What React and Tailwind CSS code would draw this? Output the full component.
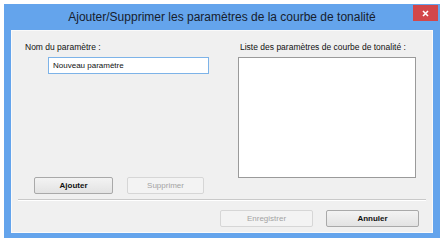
import React from "react";

const font = { fontFamily: '"Liberation Sans", Arial, sans-serif' };

const Btn = ({ label, disabled, className = "" }) => (
  <button
    type="button"
    disabled={disabled}
    className={
      "flex h-[17px] items-center justify-center rounded-[2px] border text-[8px] leading-none " +
      (disabled
        ? "border-[#d6d6d6] bg-[#f3f3f3] text-[#a3a3a3] "
        : "border-[#a9a9a9] bg-gradient-to-b from-[#f3f3f3] to-[#e3e3e3] font-bold text-[#111] ") +
      className
    }
  >
    {label}
  </button>
);

export default function App() {
  return (
    <div className="h-[240px] w-[445px] bg-white pl-[4px] pt-[4px]" style={font}>
      <div className="flex h-[234px] w-[436px] flex-col bg-[#64a4ec] px-[7px] pb-[5px]">
        {/* Title bar */}
        <div className="relative flex h-[26px] items-center justify-center">
          <span className="text-[12px] text-[#17202c]">
            Ajouter/Supprimer les paramètres de la courbe de tonalité
          </span>
          <div className="absolute right-[-5px] top-[1px] flex h-[16px] w-[25px] items-center justify-center bg-[#d3474a]">
            <svg width="7" height="7" viewBox="0 0 7 7">
              <path d="M1 1L6 6M6 1L1 6" stroke="white" strokeWidth="1.6" />
            </svg>
          </div>
        </div>

        {/* Content */}
        <div className="flex flex-1 flex-col border border-[#fafafa] bg-[#f0f0f0]">
          <div className="flex h-[164px]">
            {/* Left column */}
            <div className="flex w-[226px] flex-col pl-[13px] pt-[10px]">
              <div className="text-[8.5px] leading-[12px] text-[#111]">Nom du paramètre :</div>
              <div className="ml-[23px] mt-[4px] flex h-[17px] w-[161px] items-center border border-[#7db3e8] bg-white pl-[4px] text-[8px] text-[#111]">
                Nouveau paramètre
              </div>
              <div className="mt-auto flex gap-[14px] pb-[1px] pl-[9px]">
                <Btn label="Ajouter" className="w-[79px]" />
                <Btn label="Supprimer" disabled className="w-[77px]" />
              </div>
            </div>
            {/* Right column */}
            <div className="flex flex-col pt-[10px]">
              <div className="pl-[2px] text-[8.5px] leading-[12px] text-[#111]">
                Liste des paramètres de courbe de tonalité :
              </div>
              <div className="mt-[4px] h-[121px] w-[178px] border border-[#9a9a9a] bg-white" />
            </div>
          </div>

          {/* Separator */}
          <div className="ml-[6px] mt-[4px] w-[408px] border-b border-t border-b-white border-t-[#c9c9c9]" />

          <div className="mt-[9px] flex gap-[13px] pl-[208px]">
            <Btn label="Enregistrer" disabled className="w-[93px]" />
            <Btn label="Annuler" className="w-[93px]" />
          </div>
        </div>
      </div>
    </div>
  );
}
